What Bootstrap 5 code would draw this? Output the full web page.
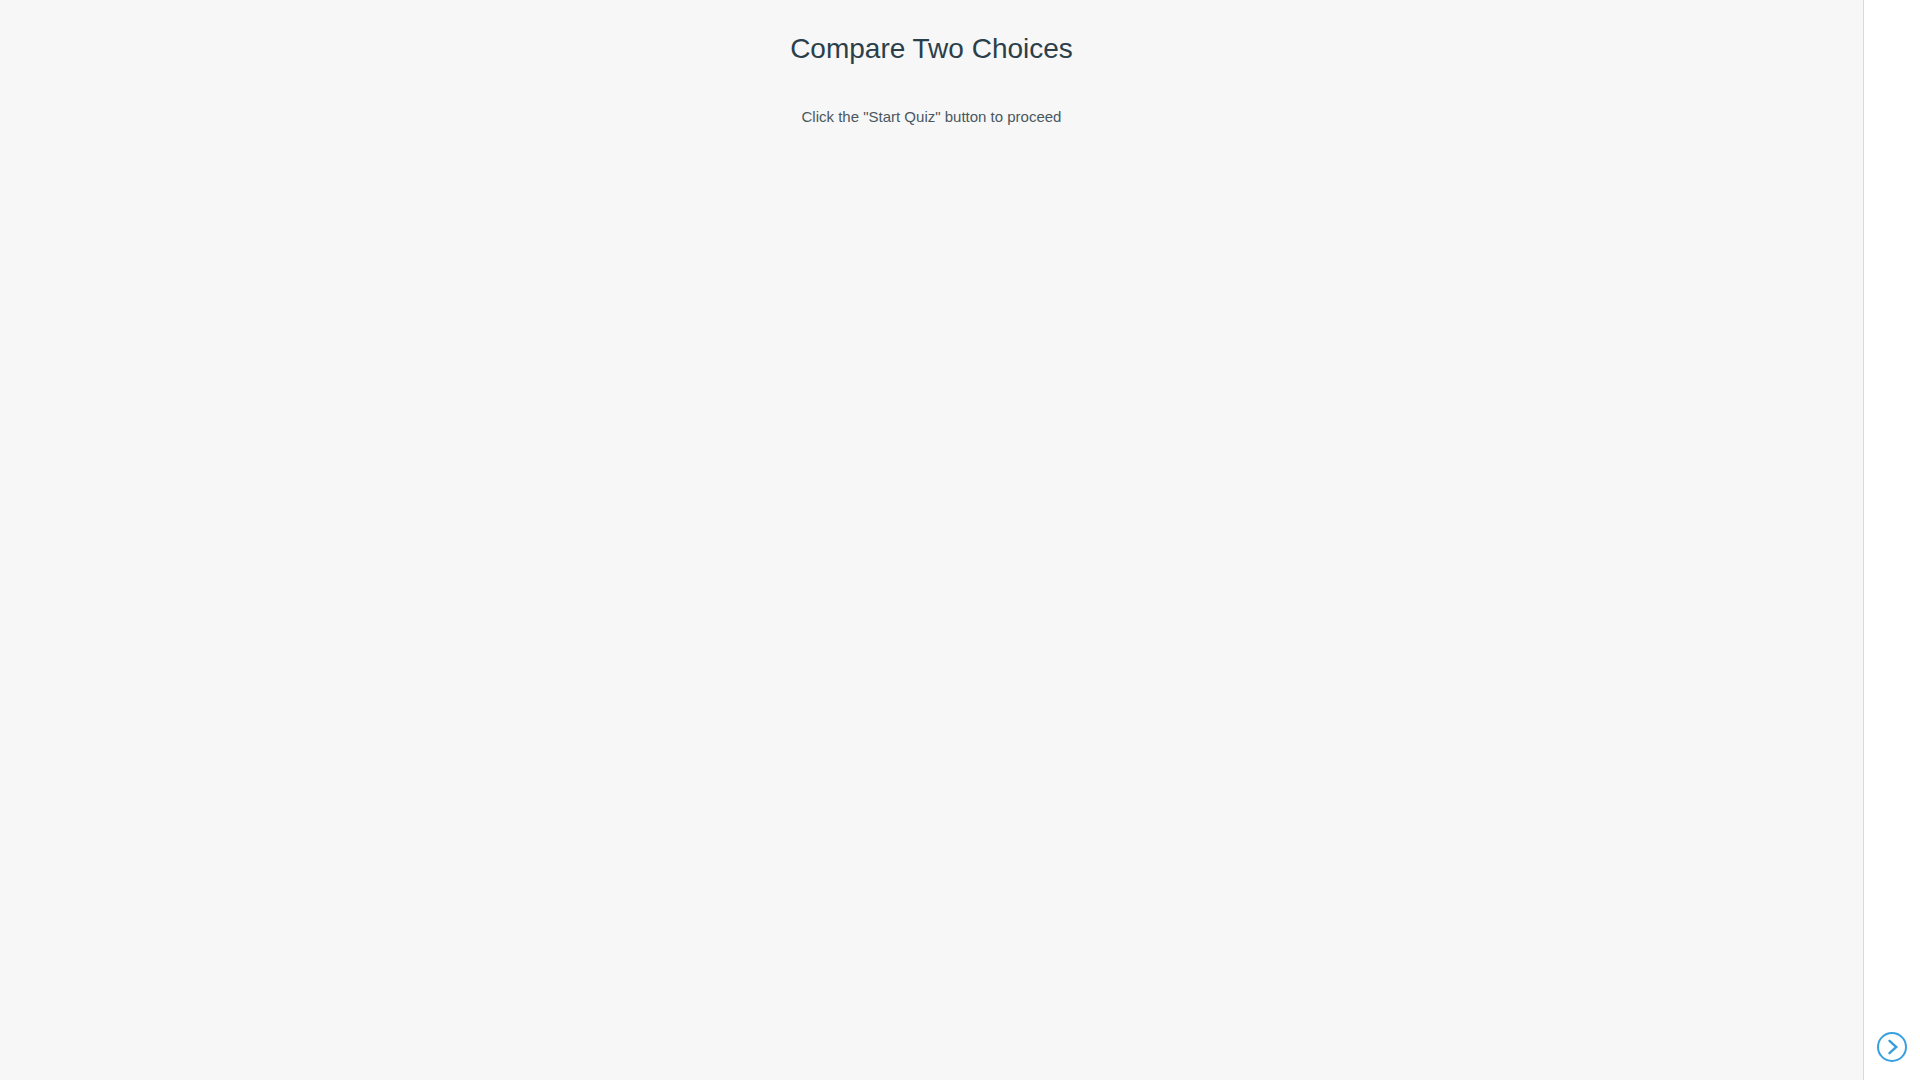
<!DOCTYPE html>
<html lang="en">
<head>
<meta charset="utf-8">
<meta name="viewport" content="width=device-width, initial-scale=1">
<title>Compare Two Choices</title>
<link rel="stylesheet" href="https://cdn.jsdelivr.net/npm/bootstrap@5.3.0/dist/css/bootstrap.min.css">
<style>
body{font-family:"Liberation Sans",Arial,sans-serif;background:#f7f7f7;color:#4a5760}
.quiz-title{font-size:28px;line-height:34px;font-weight:400;color:#2b3f4b}
.quiz-text{font-size:15px;line-height:22px;margin-top:40px}
.side-rail{width:57px;border-left:1px solid #d9d9d9;padding-bottom:17px}
.rail-toggle{width:32px;height:32px;color:#389fdf}
</style>
</head>
<body>
<div class="d-flex min-vh-100">
  <main class="flex-grow-1 text-center pt-4">
    <h1 class="quiz-title mt-2 mb-0">Compare Two Choices</h1>
    <p class="quiz-text mb-0">Click the "Start Quiz" button to proceed</p>
  </main>
  <aside class="side-rail bg-white d-flex align-items-end justify-content-center flex-shrink-0">
    <button type="button" class="rail-toggle btn border-0 p-0 d-flex" aria-label="Open panel">
      <svg width="32" height="32" viewBox="0 0 32 32" fill="none" stroke="currentColor" stroke-width="2" aria-hidden="true"><circle cx="16" cy="16" r="14"/><path d="M13.5 9.8l6.8 6.2-6.8 6.2" stroke-width="2.4" stroke-linecap="round"/></svg>
    </button>
  </aside>
</div>
<script src="https://cdn.jsdelivr.net/npm/bootstrap@5.3.0/dist/js/bootstrap.bundle.min.js"></script>
</body>
</html>
